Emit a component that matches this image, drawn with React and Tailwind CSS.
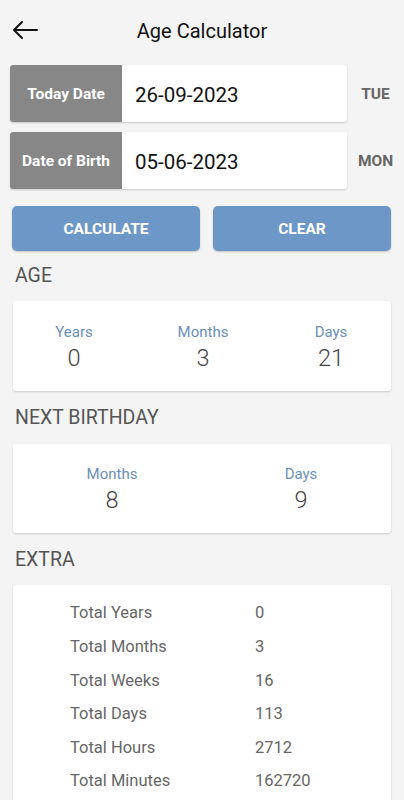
const font = { fontFamily: 'Roboto, "Noto Sans", sans-serif' }

function DateRow({ label, value, day }) {
    return (
        <div className="flex items-center">
            <div className="flex h-[57px] w-[337px] overflow-hidden rounded-[3px] bg-white shadow-[0_1px_2px_rgba(0,0,0,0.18)]">
                <div className="flex w-[112px] items-center justify-center bg-[#878787] pt-[3px] text-[15.5px] font-bold text-white">{label}</div>
                <div className="flex items-center pl-[13px] pt-[3px] text-[20.5px] text-[#111]">{value}</div>
            </div>
            <div className="flex-1 pt-[3px] text-center text-[15.5px] font-bold text-[#666]">{day}</div>
        </div>
    )
}

function Stat({ label, value, w }) {
    return (
        <div className={`flex flex-col items-center ${w}`}>
            <div className="text-[15px] leading-[20px] text-[#6a8fba]">{label}</div>
            <div className="mt-[2px] text-[23.5px] font-light leading-[28px] text-[#444]">{value}</div>
        </div>
    )
}

function Section({ title }) {
    return <div className="px-[15px] text-[19.5px] leading-[24px] text-[#555]">{title}</div>
}

const extras = [
    ['Total Years', '0'],
    ['Total Months', '3'],
    ['Total Weeks', '16'],
    ['Total Days', '113'],
    ['Total Hours', '2712'],
    ['Total Minutes', '162720'],
]

export default function App() {
    return (
        <div style={font} className="h-[800px] overflow-hidden bg-[#f4f4f4]">
            <div className="relative flex h-[62px] items-center justify-center">
                <svg className="absolute left-[12px] top-[20px]" width="26" height="20" viewBox="0 0 26 20" fill="none" stroke="#111" strokeWidth="2" strokeLinecap="round" strokeLinejoin="round">
                    <path d="M25 10H2M10 2L2 10l8 8" />
                </svg>
                <div className="text-[20px] text-[#111]">Age Calculator</div>
            </div>

            <div className="mt-[3px] flex flex-col gap-[10px] pl-[10px]">
                <DateRow label="Today Date" value="26-09-2023" day="TUE" />
                <DateRow label="Date of Birth" value="05-06-2023" day="MON" />
            </div>

            <div className="mt-[17px] flex gap-[13px] px-[12px]">
                <button className="h-[45px] w-[188px] rounded-[5px] bg-[#6c97c7] pt-[2px] text-[15.5px] font-bold text-white shadow-[0_1px_2px_rgba(0,0,0,0.2)]">CALCULATE</button>
                <button className="h-[45px] w-[178px] rounded-[5px] bg-[#6c97c7] pt-[2px] text-[15.5px] font-bold text-white shadow-[0_1px_2px_rgba(0,0,0,0.2)]">CLEAR</button>
            </div>

            <div className="mt-[13px]"><Section title="AGE" /></div>
            <div className="mx-[13px] mt-[13px] flex h-[90px] items-center rounded-[3px] bg-white pt-[2px] shadow-[0_1px_2px_rgba(0,0,0,0.18)]">
                <Stat label="Years" value="0" w="w-[122px]" />
                <Stat label="Months" value="3" w="w-[136px]" />
                <Stat label="Days" value="21" w="w-[120px]" />
            </div>

            <div className="mt-[15px]"><Section title="NEXT BIRTHDAY" /></div>
            <div className="mx-[13px] mt-[14px] flex h-[89px] items-center rounded-[3px] bg-white shadow-[0_1px_2px_rgba(0,0,0,0.18)]">
                <Stat label="Months" value="8" w="w-[198px]" />
                <Stat label="Days" value="9" w="w-[180px]" />
            </div>

            <div className="mt-[15px]"><Section title="EXTRA" /></div>
            <div className="mx-[13px] mt-[13px] rounded-[3px] bg-white pt-[12px] pb-[10px] shadow-[0_1px_2px_rgba(0,0,0,0.18)]">
                {extras.map(([k, v]) => (
                    <div key={k} className="flex h-[33.6px] items-center text-[16.5px] text-[#666]">
                        <div className="w-[242px] pl-[57px]">{k}</div>
                        <div>{v}</div>
                    </div>
                ))}
            </div>
        </div>
    )
}
